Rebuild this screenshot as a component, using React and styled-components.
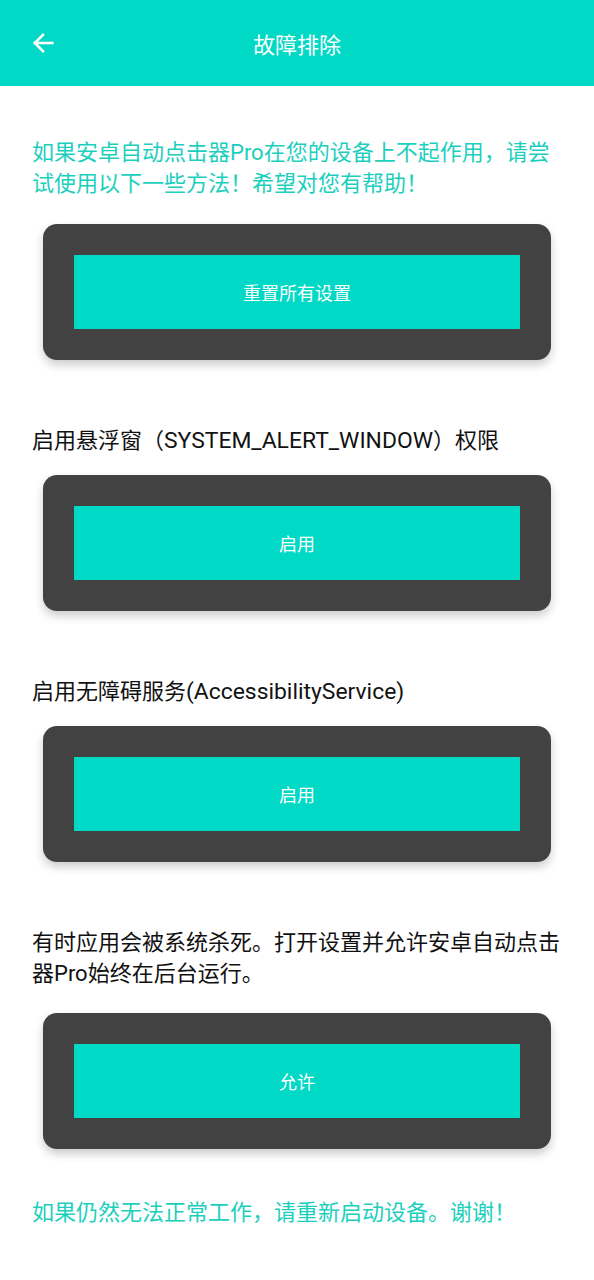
import React from 'react';
import styled, { createGlobalStyle } from 'styled-components';

const GlobalStyle = createGlobalStyle`
  html, body {
    margin: 0;
    padding: 0;
    background: #ffffff;
  }
  body {
    font-family: Roboto, "Noto Sans CJK SC", sans-serif;
  }
`;

const TEAL = '#00d9c5';

const Page = styled.div`
  width: 594px;
  min-height: 1280px;
  background: #ffffff;
`;

const Toolbar = styled.header`
  height: 86px;
  background: ${TEAL};
  display: flex;
  align-items: center;
  position: relative;
`;

const BackButton = styled.button`
  border: none;
  background: none;
  padding: 0;
  margin-left: 29px;
  width: 28px;
  height: 28px;
  display: flex;
  align-items: center;
  justify-content: center;
  cursor: pointer;
`;

const ToolbarTitle = styled.h1`
  position: absolute;
  left: 0;
  right: 0;
  margin: 0;
  text-align: center;
  font-size: 22px;
  font-weight: 400;
  color: #ffffff;
  pointer-events: none;
`;

const Content = styled.main`
  display: flex;
  flex-direction: column;
  padding: 51px 0 40px;
`;

const Text = styled.p`
  margin: 0 32px ${(p) => p.$gap}px;
  font-size: 22px;
  line-height: 31px;
  color: ${(p) => (p.$accent ? '#1ccfbd' : '#111111')};
`;

// latin runs render a touch larger than the CJK glyphs on the device
const Latin = styled.span`
  font-size: 1.04em;
  line-height: 31px;
`;

const Card = styled.div`
  margin: 0 43px ${(p) => p.$gap}px;
  height: 136px;
  box-sizing: border-box;
  padding: 31px;
  background: #424242;
  border-radius: 14px;
  box-shadow: 0 5px 10px rgba(0, 0, 0, 0.2);
  display: flex;
`;

const ActionButton = styled.button`
  flex: 1;
  border: none;
  border-radius: 0;
  background: ${TEAL};
  color: #ffffff;
  font-family: Roboto, "Noto Sans CJK SC", sans-serif;
  font-size: 18px;
  cursor: pointer;
`;

const BackArrow = () => (
  <svg width="28" height="28" viewBox="0 0 24 24" fill="none" stroke="#ffffff" strokeWidth="2.2" strokeLinecap="square">
    <path d="M20 12H5" />
    <path d="M12 5l-7 7 7 7" />
  </svg>
);

const sections = [
  {
    key: 'overlay',
    label: <>启用悬浮窗（<Latin>SYSTEM_ALERT_WINDOW</Latin>）权限</>,
    action: '启用',
    gap: 19,
  },
  {
    key: 'a11y',
    label: <>启用无障碍服务<Latin>(AccessibilityService)</Latin></>,
    action: '启用',
    gap: 19,
  },
  {
    key: 'background',
    label: '有时应用会被系统杀死。打开设置并允许安卓自动点击器Pro始终在后台运行。',
    action: '允许',
    gap: 24,
  },
];

export default function App() {
  return (
    <Page>
      <GlobalStyle />
      <Toolbar>
        <BackButton aria-label="返回">
          <BackArrow />
        </BackButton>
        <ToolbarTitle>故障排除</ToolbarTitle>
      </Toolbar>
      <Content>
        <Text $accent $gap={25}>
          如果安卓自动点击器Pro在您的设备上不起作用，请尝试使用以下一些方法！希望对您有帮助！
        </Text>
        <Card $gap={65}>
          <ActionButton>重置所有设置</ActionButton>
        </Card>
        {sections.map((s, i) => (
          <React.Fragment key={s.key}>
            <Text $gap={s.gap}>{s.label}</Text>
            <Card $gap={i === sections.length - 1 ? 48 : 65}>
              <ActionButton>{s.action}</ActionButton>
            </Card>
          </React.Fragment>
        ))}
        <Text $accent $gap={0}>
          如果仍然无法正常工作，请重新启动设备。谢谢！
        </Text>
      </Content>
    </Page>
  );
}
